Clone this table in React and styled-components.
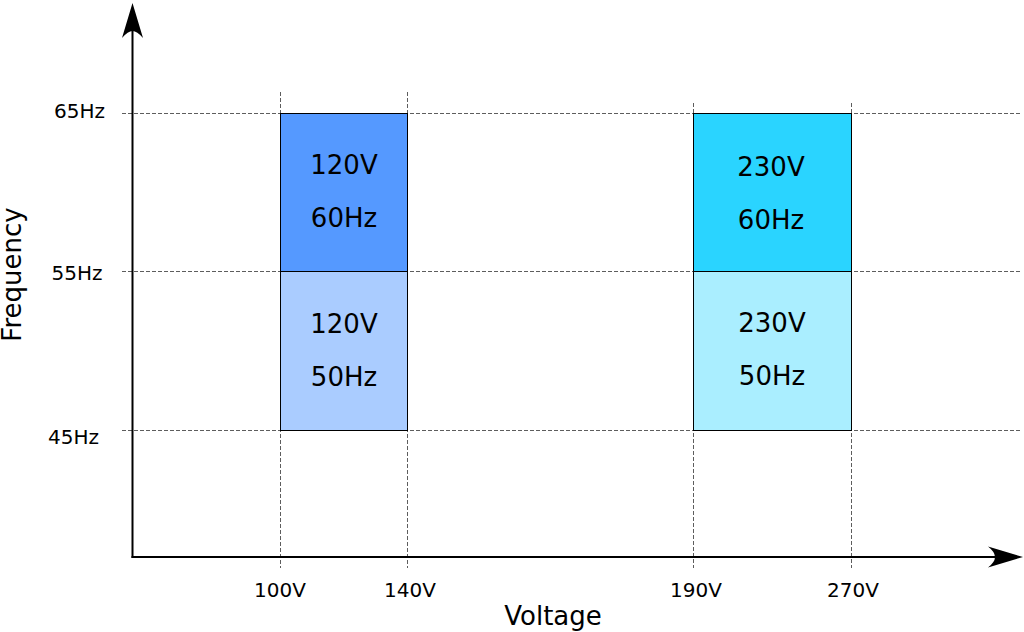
import React from 'react';
import styled, { createGlobalStyle } from 'styled-components';

const GlobalStyle = createGlobalStyle`
  html, body {
    margin: 0;
    padding: 0;
    background: #ffffff;
  }
`;

const Page = styled.div`
  width: 1024px;
  height: 632px;
  overflow: hidden;
  background: #ffffff;
`;

const Chart = styled.svg`
  display: block;
  width: 1024px;
  height: 632px;
  font-family: 'DejaVu Sans', 'Liberation Sans', sans-serif;

  .grid {
    stroke: #333333;
    stroke-width: 0.8;
    stroke-dasharray: 4 2;
    fill: none;
  }
  .axis {
    stroke: #000000;
    stroke-width: 2;
    fill: none;
  }
  .tick {
    font-size: 20px;
    fill: #000000;
  }
  .title {
    font-size: 26px;
    fill: #000000;
  }
  .block text {
    font-size: 26px;
    fill: #000000;
  }
`;

const hLines = [113, 271, 430];

const vLines = [
  { x: 280, top: 92 },
  { x: 407, top: 92 },
  { x: 693, top: 103 },
  { x: 851, top: 103 },
];

const yTicks = [
  { label: '65Hz', x: 79.5, y: 118 },
  { label: '55Hz', x: 77, y: 280 },
  { label: '45Hz', x: 73.5, y: 444 },
];

const xTicks = [
  { label: '100V', x: 280 },
  { label: '140V', x: 410 },
  { label: '190V', x: 696 },
  { label: '270V', x: 853 },
];

const blocks = [
  { x: 280, w: 127, y: 113, h: 158, fill: '#5599ff', volt: '120V', hz: '60Hz', cx: 344, b1: 174, b2: 227 },
  { x: 280, w: 127, y: 271, h: 159, fill: '#aaccff', volt: '120V', hz: '50Hz', cx: 344, b1: 333, b2: 386 },
  { x: 693, w: 158, y: 113, h: 158, fill: '#2ad4ff', volt: '230V', hz: '60Hz', cx: 771, b1: 176, b2: 229 },
  { x: 693, w: 158, y: 271, h: 159, fill: '#aaeeff', volt: '230V', hz: '50Hz', cx: 772, b1: 332, b2: 385 },
];

const App = () => {
  return (
    <Page>
      <GlobalStyle />
      <Chart viewBox="0 0 1024 632" xmlns="http://www.w3.org/2000/svg">
        {hLines.map((y) => (
          <line key={y} className="grid" x1="122" y1={y + 0.5} x2="1020" y2={y + 0.5} />
        ))}
        {vLines.map((v) => (
          <line key={v.x} className="grid" x1={v.x + 0.5} y1={v.top} x2={v.x + 0.5} y2="568" />
        ))}

        {blocks.map((b, i) => (
          <g className="block" key={i}>
            <rect x={b.x + 0.5} y={b.y + 0.5} width={b.w} height={b.h} fill={b.fill} stroke="#000" strokeWidth="1" />
            <text x={b.cx} y={b.b1} textAnchor="middle">{b.volt}</text>
            <text x={b.cx} y={b.b2} textAnchor="middle">{b.hz}</text>
          </g>
        ))}

        {/* axes */}
        <line className="axis" x1="132.5" y1="558" x2="132.5" y2="28" />
        <path d="M132.5 3 L143 38 Q137 31 132.5 31 Q128 31 122 38 Z" fill="#000" />
        <line className="axis" x1="131.5" y1="557" x2="1000" y2="557" />
        <path d="M1023 557 L988 567.5 Q995 562 995 557 Q995 552 988 546.5 Z" fill="#000" />

        {yTicks.map((t) => (
          <text key={t.label} className="tick" x={t.x} y={t.y} textAnchor="middle">{t.label}</text>
        ))}
        {xTicks.map((t) => (
          <text key={t.label} className="tick" x={t.x} y="597" textAnchor="middle">{t.label}</text>
        ))}

        <text className="title" x="553" y="625" textAnchor="middle">Voltage</text>
        <text className="title" x="0" y="0" textAnchor="middle" transform="translate(20.5 274.5) rotate(-90)">Frequency</text>
      </Chart>
    </Page>
  );
};

export default App;
